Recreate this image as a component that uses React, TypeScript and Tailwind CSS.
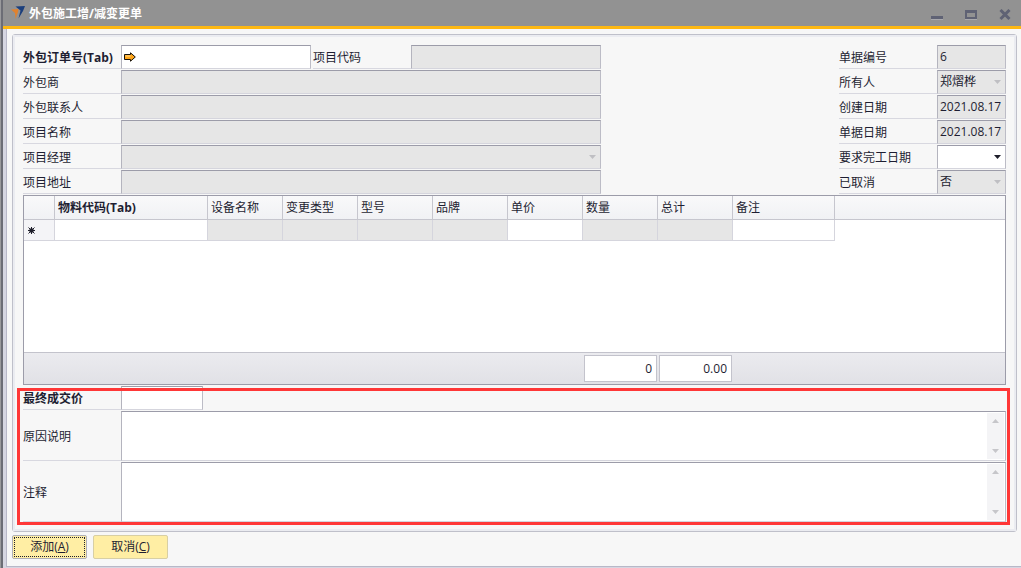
import type { ReactNode } from "react";

type Kind = "text" | "select";

interface FieldProps {
  id: string;
  label: string;
  value?: string;
  kind?: Kind;
  disabled?: boolean;
}

const box =
  "block h-6 w-full appearance-none rounded-none border border-t-[#9c9ca9] border-r-[#bcbcc6] border-b-[#d5d5dd] border-l-[#b4b4be] pl-[2px] text-[12px] text-[#1e1e32] opacity-100 outline-none";

const Label = ({ htmlFor, bold, children }: { htmlFor: string; bold?: boolean; children: ReactNode }) => (
  <label
    htmlFor={htmlFor}
    className={`flex w-[98px] shrink-0 items-center whitespace-nowrap border-b border-[#d8d8e0] pt-[2px] ${bold ? "font-bold" : ""}`}
  >
    {children}
  </label>
);

const Control = ({ id, value = "", kind = "text", disabled = true }: Omit<FieldProps, "label">) => {
  const bg = disabled ? "bg-[#e6e6e6]" : "bg-white";
  if (kind === "select") {
    return (
      <div className="relative min-w-0 flex-1">
        <select id={id} disabled={disabled} defaultValue={value} className={`${box} leading-[22px] ${bg}`}>
          <option value={value}>{value}</option>
        </select>
        <svg
          viewBox="0 0 7 4"
          className={`pointer-events-none absolute top-[10px] right-[5px] h-1 w-[7px] ${disabled ? "fill-[#bfbfc3]" : "fill-[#1e1e2a]"}`}
        >
          <path d="M0 0h7L3.5 4z" />
        </svg>
      </div>
    );
  }
  return (
    <div className="min-w-0 flex-1">
      <input id={id} type="text" disabled={disabled} defaultValue={value} className={`${box} pb-[2px] leading-5 ${bg}`} />
    </div>
  );
};

const Field = ({ label, ...rest }: FieldProps) => (
  <div className="flex h-6">
    <Label htmlFor={rest.id}>{label}</Label>
    <Control {...rest} />
  </div>
);

const leftFields: FieldProps[] = [
  { id: "vendor", label: "外包商" },
  { id: "contact", label: "外包联系人" },
  { id: "project-name", label: "项目名称" },
  { id: "manager", label: "项目经理", kind: "select" },
  { id: "address", label: "项目地址" },
];

const rightFields: FieldProps[] = [
  { id: "doc-no", label: "单据编号", value: "6" },
  { id: "owner", label: "所有人", value: "郑熠桦", kind: "select" },
  { id: "created", label: "创建日期", value: "2021.08.17" },
  { id: "doc-date", label: "单据日期", value: "2021.08.17" },
  { id: "due-date", label: "要求完工日期", kind: "select", disabled: false },
  { id: "cancelled", label: "已取消", value: "否", kind: "select" },
];

const columns = [
  { title: "物料代码(Tab)", width: "w-[153px]", editable: true },
  { title: "设备名称", width: "w-[75px]" },
  { title: "变更类型", width: "w-[75px]" },
  { title: "型号", width: "w-[75px]" },
  { title: "品牌", width: "w-[75px]" },
  { title: "单价", width: "w-[75px]", editable: true },
  { title: "数量", width: "w-[75px]" },
  { title: "总计", width: "w-[75px]" },
  { title: "备注", width: "w-[102px]", editable: true },
];

const Logo = () => (
  <svg viewBox="0 0 14 14" className="h-[14px] w-[14px]">
    <path d="M0 3.5 7.5 3 7 6 4.5 13 4 7z" fill="#e0822f" />
    <path d="M4.5.5 14 0 12 5 7.5 12.5 9.5 4.5z" fill="#1c3f7c" />
  </svg>
);

const TitleBar = () => (
  <header className="flex h-[29px] items-center border-b-3 border-[#fdb813] bg-[#929292] pr-[10px] pl-2">
    <Logo />
    <h1 className="ml-1 flex-1 pt-[2px] text-[12px] font-bold text-white">外包施工增/减变更单</h1>
    <div className="flex gap-[22px] pt-[3px] text-[#5f6274]">
      <button type="button" aria-label="最小化">
        <svg viewBox="0 0 12 12" className="block h-3 w-3">
          <path d="M0 7h12v3H0z" fill="currentColor" />
          <path d="M0 10h12v1H0z" fill="#a9a9ad" />
        </svg>
      </button>
      <button type="button" aria-label="最大化">
        <svg viewBox="0 0 12 12" className="block h-3 w-3">
          <path d="M0 1h12v9H0zM2 4v4h8V4z" fill="currentColor" fillRule="evenodd" />
          <path d="M0 10h12v1H0z" fill="#a9a9ad" />
        </svg>
      </button>
      <button type="button" aria-label="关闭">
        <svg viewBox="0 0 12 12" className="block h-3 w-3">
          <path d="M1.5 1l9 9M10.5 1l-9 9" stroke="currentColor" strokeWidth="3" />
        </svg>
      </button>
    </div>
  </header>
);

const ItemGrid = () => (
  <div className="flex h-[190px] flex-col border border-[#9c9ca9] bg-white">
    <div className="flex-1 overflow-hidden">
      <table className="w-full table-fixed border-separate border-spacing-0 text-left">
        <thead>
          <tr className="h-6 bg-linear-to-b from-[#f9f9fa] to-[#f0f1f4]">
            <th className="w-[31px] border-r border-b border-[#c6c6ce] p-0"></th>
            {columns.map((col, i) => (
              <th
                key={col.title}
                className={`${col.width} border-r border-b border-[#c6c6ce] p-0 pl-[3px] whitespace-nowrap ${i === 0 ? "font-bold" : "font-normal"}`}
              >
                {col.title}
              </th>
            ))}
            <th className="border-b border-[#c6c6ce] p-0"></th>
          </tr>
        </thead>
        <tbody>
          <tr className="h-[21px]">
            <td className="border-r border-b border-[#d5d5dd] bg-[#f4f4f7] p-0 pl-1">
              <svg viewBox="0 0 7 7" className="block h-[7px] w-[7px]">
                <path d="M3.5 0v7M0 3.5h7M.5 .5l6 6M6.5 .5l-6 6" stroke="#1e1e2a" />
                <path d="M2 1.5h3M2 5.5h3M1.5 2v3M5.5 2v3" stroke="#1e1e2a" strokeOpacity=".5" />
              </svg>
            </td>
            {columns.map((col) => (
              <td key={col.title} className="border-r border-b border-[#d5d5dd] p-0">
                <input
                  type="text"
                  aria-label={col.title}
                  disabled={!col.editable}
                  className={`block h-5 w-full px-1 outline-none ${col.editable ? "bg-white" : "bg-[#e6e6e6]"}`}
                />
              </td>
            ))}
            <td className="p-0"></td>
          </tr>
        </tbody>
      </table>
    </div>
    {/* Totals */}
    <div className="flex h-8 gap-[2px] border-t border-[#c3c3cc] bg-linear-to-b from-[#ebebef] to-[#e1e1e6] pt-[2px] pl-[560px]">
      {["0", "0.00"].map((total, i) => (
        <input
          key={total}
          type="text"
          readOnly
          aria-label={i === 0 ? "数量合计" : "总计合计"}
          defaultValue={total}
          className="h-[27px] w-[73px] border border-[#c3c3cc] bg-white pr-1 text-right text-[#1e1e32] outline-none"
        />
      ))}
    </div>
  </div>
);

const Memo = ({ id, label, height }: { id: string; label: string; height: string }) => (
  <div className={`flex ${height}`}>
    <Label htmlFor={id}>{label}</Label>
    <div className="flex min-w-0 flex-1 border border-t-[#9c9ca9] border-r-[#bcbcc6] border-b-[#d5d5dd] border-l-[#b4b4be] bg-white p-px">
      <textarea id={id} className="block min-w-0 flex-1 resize-none overflow-hidden px-1 outline-none" />
      <div className="flex w-[17px] flex-col items-center justify-between bg-[#f4f4f6] py-[6px]">
        <button type="button" aria-label={`${label} 向上`}>
          <svg viewBox="0 0 7 4" className="block h-1 w-[7px] fill-[#c6c6ca]">
            <path d="M0 4h7L3.5 0z" />
          </svg>
        </button>
        <button type="button" aria-label={`${label} 向下`}>
          <svg viewBox="0 0 7 4" className="block h-1 w-[7px] fill-[#c6c6ca]">
            <path d="M0 0h7L3.5 4z" />
          </svg>
        </button>
      </div>
    </div>
  </div>
);

export default function App() {
  return (
    <div className="flex min-h-screen flex-col border-l border-[#9a9a9c] bg-[#f7f7f7] font-['Open_Sans','Noto_Sans_CJK_SC',sans-serif] text-[12px] leading-4 text-[#1e1e32]">
      <div className="flex flex-1 flex-col border-l-2 border-[#6c6d75]">
        <TitleBar />
        <div className="flex flex-1 flex-col border-b border-l-3 border-[#d6d6e1]">
          <main className="flex-1 border-b border-l border-[#b8b8c8] pt-[5px] pr-1 pl-[5px]">
            <form>
              <div className="rounded-[3px] border border-[#bfc0ca]">
                <div className="border-2 border-[#ebecf1] px-2 pt-2 pb-[7px]">
                  <div className="flex justify-between">
                    <div className="flex w-[578px] flex-col gap-px">
                      <div className="flex h-6 gap-[2px]">
                        <div className="flex flex-1">
                          <Label htmlFor="order-no" bold>
                            外包订单号(Tab)
                          </Label>
                          <div className="relative flex flex-1">
                            <Control id="order-no" disabled={false} />
                            <svg viewBox="0 0 12 10" className="absolute top-[7px] left-[3px] h-[10px] w-3">
                              <path
                                d="M.5 2.5h6V.8L11.3 5 6.5 9.2V7.5h-6z"
                                fill="#ffa61a"
                                stroke="#15110a"
                              />
                              <path d="M1.5 4h5" stroke="#ffd98a" />
                            </svg>
                          </div>
                        </div>
                        <div className="flex flex-1">
                          <Label htmlFor="project-code">项目代码</Label>
                          <Control id="project-code" />
                        </div>
                      </div>
                      {leftFields.map((f) => (
                        <Field key={f.id} {...f} />
                      ))}
                    </div>
                    <div className="flex w-[167px] flex-col gap-px">
                      {rightFields.map((f) => (
                        <Field key={f.id} {...f} />
                      ))}
                    </div>
                  </div>

                  <div className="mt-px">
                    <ItemGrid />
                  </div>

                  <section className="relative mt-px flex flex-col gap-px">
                    <div className="flex h-6 w-[180px]">
                      <Label htmlFor="final-price" bold>
                        最终成交价
                      </Label>
                      <Control id="final-price" disabled={false} />
                    </div>
                    <Memo id="reason" label="原因说明" height="h-[50px]" />
                    <Memo id="remark" label="注释" height="h-[60px]" />
                    {/* Highlight frame */}
                    <div className="pointer-events-none absolute top-[2px] -right-1 -bottom-[3px] -left-[6px] border-3 border-[#ff3737]"></div>
                  </section>
                </div>
              </div>

              <div className="mt-[3px] flex gap-[6px]">
                <button
                  type="button"
                  className="h-6 w-[75px] rounded-[2px] border border-[#b0b0b8] bg-[#ffeea4] p-px"
                >
                  <span className="flex h-full items-center justify-center border border-dotted border-[#1e1e2a]">
                    添加(<u>A</u>)
                  </span>
                </button>
                <button type="button" className="h-6 w-[75px] rounded-[2px] border border-[#d8cfa4] bg-[#ffeea4]">
                  取消(<u>C</u>)
                </button>
              </div>
            </form>
          </main>
        </div>
      </div>
    </div>
  );
}
